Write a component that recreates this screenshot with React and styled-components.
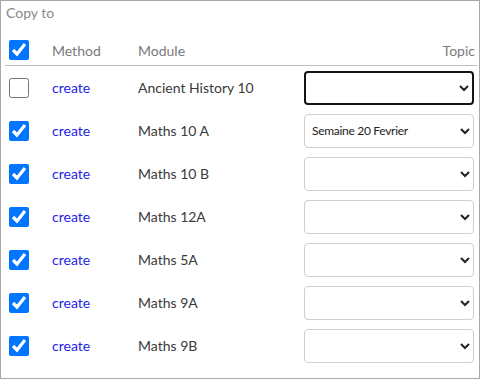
import React from "react";
import styled, { createGlobalStyle } from "styled-components";

const Global = createGlobalStyle`
  html, body { margin: 0; padding: 0; background: #fff; }
  body { font-family: Lato, "Noto Sans", sans-serif; }
`;

const Panel = styled.div`
  box-sizing: border-box;
  width: 480px;
  height: 379px;
  border: 1px solid #a8a8a8;
  padding: 3px 2px 0 4px;
  background: #fff;
`;

const Title = styled.div`
  font-size: 14px;
  line-height: 17px;
  color: #888;
  padding-left: 1px;
  margin-bottom: 14px;
`;

const Grid = styled.div`
  display: grid;
  grid-template-columns: 47px 86px 166px 1fr;
`;

const HeadCell = styled.div`
  height: 30px;
  display: flex;
  align-items: center;
  justify-content: ${(p) => (p.$right ? "flex-end" : "flex-start")};
  padding-right: ${(p) => (p.$right ? "2px" : "0")};
  padding-left: ${(p) => (p.$first ? "4px" : "0")};
  border-bottom: 1px solid #bdbdbd;
  font-size: 14px;
  color: #7a7a7a;
`;

const Cell = styled.div`
  height: 43px;
  display: flex;
  align-items: center;
  padding-left: ${(p) => (p.$first ? "4px" : "0")};
  padding-right: ${(p) => (p.$last ? "2px" : "0")};
  font-size: 14px;
  color: #3a3a3a;
`;

const Check = styled.input.attrs({ type: "checkbox" })`
  width: 20px;
  height: 20px;
  margin: 0;
  accent-color: #0075ff;
`;

const MethodLink = styled.span`
  color: #2424e6;
  font-size: 14px;
`;

const TopicSelect = styled.select`
  box-sizing: border-box;
  width: 170px;
  height: 34px;
  border: ${(p) => (p.$focused ? "2px solid #141414" : "1px solid #cfcfcf")};
  border-radius: 4px;
  background: #fff;
  padding: 0 ${(p) => (p.$focused ? "2px" : "3px")};
  font-family: Lato, "Noto Sans", sans-serif;
  font-size: 12px;
  letter-spacing: -0.3px;
  color: #222;
  outline: none;
`;

const rows = [
  { checked: false, module: "Ancient History 10", topic: "", focused: true },
  { checked: true, module: "Maths 10 A", topic: "Semaine 20 Fevrier" },
  { checked: true, module: "Maths 10 B", topic: "" },
  { checked: true, module: "Maths 12A", topic: "" },
  { checked: true, module: "Maths 5A", topic: "" },
  { checked: true, module: "Maths 9A", topic: "" },
  { checked: true, module: "Maths 9B", topic: "" },
];

export default function App() {
  return (
    <>
      <Global />
      <Panel>
        <Title>Copy to</Title>
        <Grid>
          <HeadCell $first>
            <Check defaultChecked />
          </HeadCell>
          <HeadCell>Method</HeadCell>
          <HeadCell>Module</HeadCell>
          <HeadCell $right>Topic</HeadCell>
          {rows.map((r, i) => (
            <React.Fragment key={i}>
              <Cell $first>
                <Check defaultChecked={r.checked} />
              </Cell>
              <Cell>
                <MethodLink>create</MethodLink>
              </Cell>
              <Cell>{r.module}</Cell>
              <Cell $last>
                <TopicSelect $focused={r.focused} defaultValue={r.topic}>
                  <option value=""></option>
                  {r.topic && <option value={r.topic}>{r.topic}</option>}
                </TopicSelect>
              </Cell>
            </React.Fragment>
          ))}
        </Grid>
      </Panel>
    </>
  );
}
